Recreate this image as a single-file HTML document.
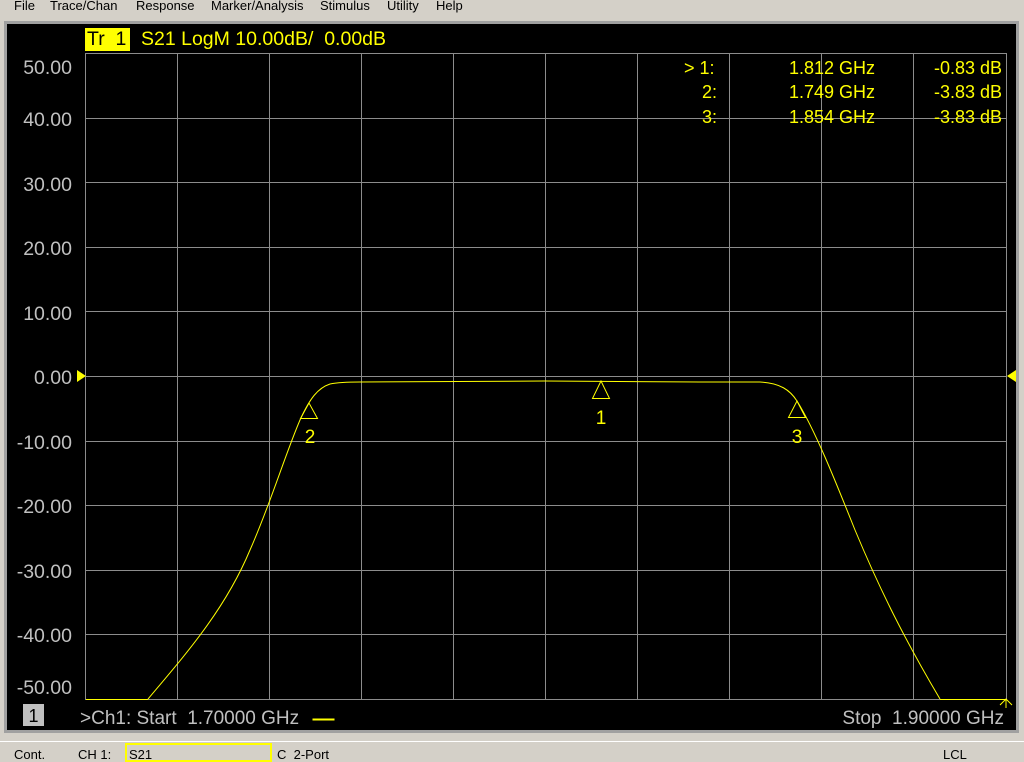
<!DOCTYPE html>
<html><head><meta charset="utf-8"><style>
body{margin:0;width:1024px;height:762px;background:#d4d0c8;position:relative;overflow:hidden;font-family:"Liberation Sans",sans-serif}
.menu{position:absolute;top:0;left:0;height:18px;font-size:13px;color:#000}
.menu span{position:absolute;top:-2px;white-space:nowrap}
.panel{position:absolute;left:4px;top:21px;width:1015px;height:712px;background:#a0a0a0}
.blk{position:absolute;left:7px;top:24px;width:1009px;height:706px;background:#000}
.t{position:absolute;white-space:nowrap}
</style></head><body>
<div class="menu">
<span style="left:14px">File</span><span style="left:50px">Trace/Chan</span><span style="left:136px">Response</span><span style="left:211px">Marker/Analysis</span><span style="left:320px">Stimulus</span><span style="left:387px">Utility</span><span style="left:436px">Help</span>
</div>
<div class="panel"></div>
<div class="blk"></div>
<div class="t" style="left:85px;top:28px;width:43px;height:23px;background:#ffff00;color:#000;font-size:19.5px;line-height:23px;padding-left:2px">Tr&nbsp; 1</div>
<div class="t" style="left:141px;top:28px;color:#ffff00;font-size:19.5px;line-height:23px">S21 LogM 10.00dB/&nbsp; 0.00dB</div>
<svg style="position:absolute;left:0;top:0" width="1024" height="762">
<g stroke="#8c8c8c" stroke-width="1" fill="none">
<rect x="85.5" y="53.5" width="921" height="646"/>
<path d="M177.5 53V699M269.5 53V699M361.5 53V699M453.5 53V699M545.5 53V699M637.5 53V699M729.5 53V699M821.5 53V699M913.5 53V699"/>
<path d="M85 118.5H1006M85 182.5H1006M85 247.5H1006M85 311.5H1006M85 376.5H1006M85 441.5H1006M85 505.5H1006M85 570.5H1006M85 634.5H1006"/>
</g>
<path d="M148 699 C185 655 225 610 250 550 C270 505 285 455 300 420 C310 398 318 388 330 384 C340 382 350 382 360 382 L545 381 L700 382 L760 382 C780 383 790 390 797 401 C815 430 835 480 855 530 C880 590 905 640 940 699" stroke="#ffff00" fill="none" stroke-width="1"/>
<path d="M86 699.5H148M940 699.5H1006M1006 699V708M1000 705L1006 699L1012 705" stroke="#ffff00" fill="none"/>
<g stroke="#ffff00" fill="none">
<path d="M309 403L300.5 418.5H317.5Z"/>
<path d="M601 381L592.5 398.5H609.5Z"/>
<path d="M797 401L788.5 417.5H805.5Z"/>
<path d="M312.5 719.5H334.5" stroke-width="2"/>
</g>
<path d="M77 370L86 376L77 382Z" fill="#ffff00"/>
<path d="M1016 370L1007 376L1016 382Z" fill="#ffff00"/>
<g fill="#ffff00" font-family="Liberation Sans" font-size="19" text-anchor="middle">
<text x="310" y="443">2</text><text x="601" y="424">1</text><text x="797" y="443">3</text>
</g>
<g fill="#ffff00" font-family="Liberation Sans" font-size="18">
<text x="684" y="74">&gt; 1:</text><text x="702" y="98">2:</text><text x="702" y="123">3:</text>
<text x="875" y="74" text-anchor="end">1.812 GHz</text><text x="875" y="98" text-anchor="end">1.749 GHz</text><text x="875" y="123" text-anchor="end">1.854 GHz</text>
<text x="1002" y="74" text-anchor="end">-0.83 dB</text><text x="1002" y="98" text-anchor="end">-3.83 dB</text><text x="1002" y="123" text-anchor="end">-3.83 dB</text>
</g>
<g fill="#c0c0c0" font-family="Liberation Sans" font-size="19.5" text-anchor="end">
<text x="72" y="74">50.00</text><text x="72" y="126">40.00</text><text x="72" y="191">30.00</text><text x="72" y="255">20.00</text><text x="72" y="320">10.00</text><text x="72" y="384">0.00</text><text x="72" y="449">-10.00</text><text x="72" y="513">-20.00</text><text x="72" y="578">-30.00</text><text x="72" y="642">-40.00</text><text x="72" y="694">-50.00</text>
</g>
<rect x="23" y="704" width="21" height="22" fill="#c0c0c0"/>
<text x="33.5" y="722" fill="#000" font-family="Liberation Sans" font-size="18" text-anchor="middle">1</text>
<text x="80" y="724" fill="#c0c0c0" font-family="Liberation Sans" font-size="19">&gt;Ch1: Start&#160; 1.70000 GHz</text>
<text x="1004" y="724" fill="#c0c0c0" font-family="Liberation Sans" font-size="19" text-anchor="end">Stop&#160; 1.90000 GHz</text>
<rect x="126" y="744" width="145" height="17" fill="none" stroke="#ffff00" stroke-width="2"/>
<g fill="#000" font-family="Liberation Sans" font-size="13">
<text x="14" y="759">Cont.</text><text x="78" y="759">CH 1:</text><text x="129" y="759">S21</text><text x="277" y="759">C&#160; 2-Port</text><text x="943" y="759">LCL</text>
</g>
<path d="M0 741.5H1024" stroke="#fff"/>
</svg>
</body></html>
